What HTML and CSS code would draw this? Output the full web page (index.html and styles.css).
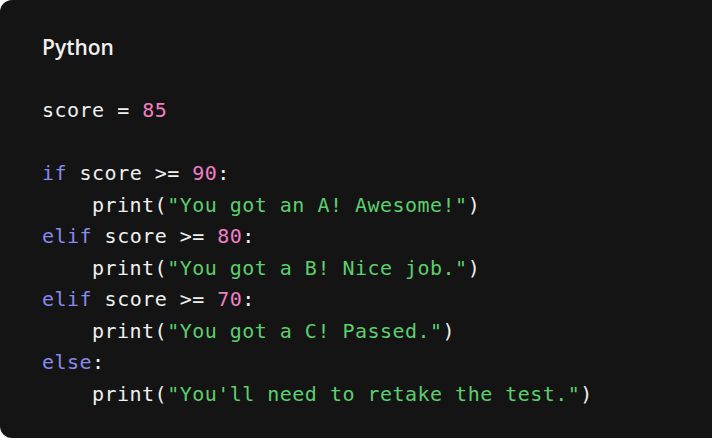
FILE: index.html
```html
<!DOCTYPE html>
<html>
<head>
<meta charset="utf-8">
<link rel="stylesheet" href="styles.css">
</head>
<body>
<div class="card">
  <div class="lang">Python</div>
  <div class="code">
    <div class="line">score = <span class="n">85</span></div>
    <div class="line blank"></div>
    <div class="line"><span class="k">if</span> score &gt;= <span class="n">90</span>:</div>
    <div class="line ind">print(<span class="s">"You got an A! Awesome!"</span>)</div>
    <div class="line"><span class="k">elif</span> score &gt;= <span class="n">80</span>:</div>
    <div class="line ind">print(<span class="s">"You got a B! Nice job."</span>)</div>
    <div class="line"><span class="k">elif</span> score &gt;= <span class="n">70</span>:</div>
    <div class="line ind">print(<span class="s">"You got a C! Passed."</span>)</div>
    <div class="line"><span class="k">else</span>:</div>
    <div class="line ind">print(<span class="s">"You'll need to retake the test."</span>)</div>
  </div>
</div>
</body>
</html>
```
FILE: styles.css
```css
html, body {
  margin: 0;
  padding: 0;
  background: #ffffff;
  overflow: hidden;
}
.card {
  width: 740px;
  height: 438px;
  box-sizing: border-box;
  background: #141414;
  border-radius: 12px 0 0 12px;
  padding: 33px 0 0 42px;
}
.lang {
  font-family: "Open Sans", sans-serif;
  font-weight: 600;
  font-size: 21px;
  line-height: 28px;
  color: #f0f0f0;
}
.code {
  margin-top: 34px;
  font-family: "DejaVu Sans Mono", monospace;
  font-size: 20px;
  letter-spacing: 0.48px;
  line-height: 31.5px;
  color: #f0f0f0;
}
.line {
  white-space: pre;
  height: 31.5px;
}
.ind {
  padding-left: 50px;
}
.k { color: #8789ee; }
.n { color: #f07fc4; }
.s { color: #5ccf6e; }
```
